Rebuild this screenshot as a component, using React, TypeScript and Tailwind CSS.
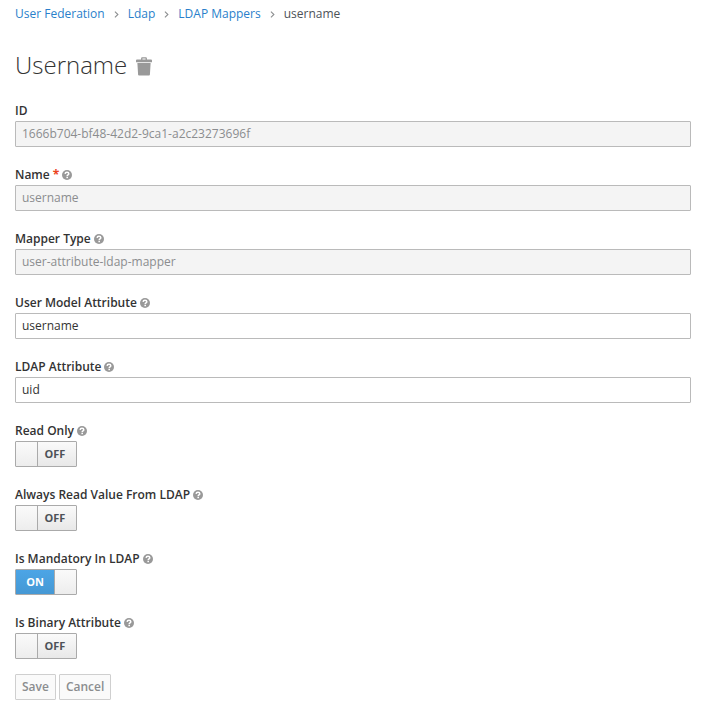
import { useState } from "react";

function HelpIcon() {
  return (
    <svg viewBox="0 0 10 10" className="mb-px size-[10px] shrink-0" aria-hidden="true">
      <circle cx="5" cy="5" r="5" fill="#999999" />
      <path d="M3.1 3.9C3.2 2.7 4 2.2 5 2.2C6.1 2.2 6.8 2.9 6.8 3.7C6.8 4.9 5.2 4.8 5.2 6" fill="none" stroke="#fff" strokeWidth="1.5" />
      <rect x="4.4" y="6.7" width="1.6" height="1.5" fill="#fff" />
    </svg>
  );
}

function TrashIcon() {
  return (
    <svg viewBox="0 0 16 19" className="h-[19px] w-4" fill="#999999" aria-hidden="true">
      <path d="M0 3.6Q0 2.6 1 2.6H5.1V1.2Q5.1 .2 6.1 .2H9.9Q10.9 .2 10.9 1.2V2.6H15Q16 2.6 16 3.6V5.2H0ZM6.4 1.4V2.6H9.6V1.4Z" fillRule="evenodd" />
      <path d="M1.4 6.1H14.6L13.9 17.8Q13.8 18.6 13 18.6H3Q2.2 18.6 2.1 17.8Z" />
    </svg>
  );
}

function Separator() {
  return (
    <svg viewBox="0 0 5 8" className="h-[7px] w-[5px]" fill="none" stroke="#8b8d8f" strokeWidth="1.2" aria-hidden="true">
      <path d="M.7 .8L4.1 4L.7 7.2" />
    </svg>
  );
}

type LabelProps = { id: string; label: string; required?: boolean; help?: boolean };

function FieldLabel({ id, label, required, help = true }: LabelProps) {
  return (
    <label htmlFor={id} className="flex w-fit items-center gap-[3px] font-semibold text-[#333333]">
      <span>{label}</span>
      {required && <span className="font-bold text-[#eb4220]">*</span>}
      {help && <HelpIcon />}
    </label>
  );
}

function TextField({ value, disabled, ...label }: LabelProps & { value: string; disabled?: boolean }) {
  return (
    <div>
      <FieldLabel {...label} />
      <input
        id={label.id}
        type="text"
        defaultValue={value}
        disabled={disabled}
        className="block h-[26px] w-full rounded-[1px] border border-[#bababa] bg-white px-1.5 pb-0.5 leading-[22px] text-[#333333] disabled:bg-[#f4f4f4] disabled:text-[#8b8d8f]"
      />
    </div>
  );
}

function Toggle({ on: initial = false, ...label }: LabelProps & { on?: boolean }) {
  const [on, setOn] = useState(initial);
  const handle = <span className="w-[21px] bg-linear-to-b from-[#fafafa] to-[#ededed]" />;
  return (
    <div>
      <FieldLabel {...label} />
      <label className="relative flex h-[26px] w-[62px] overflow-hidden rounded-[1px] border border-[#aaaaaa] text-[11px] font-bold leading-6">
        <input
          id={label.id}
          type="checkbox"
          checked={on}
          onChange={() => setOn(!on)}
          className="absolute inset-0 size-full cursor-pointer opacity-0"
        />
        {on ? (
          <>
            <span className="flex-1 border-r border-[#aaaaaa] bg-linear-to-b from-[#4ca5e6] to-[#4598d4] text-center text-white">ON</span>
            {handle}
          </>
        ) : (
          <>
            {handle}
            <span className="flex-1 border-l border-[#aaaaaa] bg-linear-to-b from-[#fafafa] to-[#e8e8e8] pr-1 text-center text-[#4d5258]">OFF</span>
          </>
        )}
      </label>
    </div>
  );
}

const button =
  "h-[26px] rounded-[1px] border border-[#cfcfcf] bg-[#fafafa] px-1.5 font-semibold leading-6 text-[#8b8d8f]";

export default function App() {
  return (
    <main className="bg-white pr-[13px] pb-[13px] pl-[15px] font-['Open_Sans',sans-serif] text-[12px] leading-5 text-[#333333]">
      <nav aria-label="Breadcrumb" className="pt-1">
        <ol className="flex items-center gap-[9px] text-[#2a7fcb]">
          <li><a href="#federation">User Federation</a></li>
          <li><Separator /></li>
          <li><a href="#ldap">Ldap</a></li>
          <li><Separator /></li>
          <li><a href="#mappers">LDAP Mappers</a></li>
          <li><Separator /></li>
          <li aria-current="page" className="text-[#4d5258]">username</li>
        </ol>
      </nav>
      <div className="mt-[23px] flex items-center gap-[9px]">
        <h1 className="text-[24px] font-light leading-9">Username</h1>
        <button type="button" aria-label="Delete mapper" className="pt-0.5"><TrashIcon /></button>
      </div>
      <form className="mt-[18px]" onSubmit={(e) => e.preventDefault()}>
        <div className="flex flex-col gap-[18px]">
          <TextField id="mapper-id" label="ID" help={false} value="1666b704-bf48-42d2-9ca1-a2c23273696f" disabled />
          <TextField id="name" label="Name" required value="username" disabled />
          <TextField id="mapper-type" label="Mapper Type" value="user-attribute-ldap-mapper" disabled />
          <TextField id="user-model-attribute" label="User Model Attribute" value="username" />
          <TextField id="ldap-attribute" label="LDAP Attribute" value="uid" />
          <Toggle id="read-only" label="Read Only" />
          <Toggle id="always-read" label="Always Read Value From LDAP" />
          <Toggle id="mandatory" label="Is Mandatory In LDAP" on />
          <Toggle id="binary" label="Is Binary Attribute" />
        </div>
        <div className="mt-[15px] flex gap-[3px]">
          <button type="submit" disabled className={button}>Save</button>
          <button type="button" disabled className={button}>Cancel</button>
        </div>
      </form>
    </main>
  );
}
